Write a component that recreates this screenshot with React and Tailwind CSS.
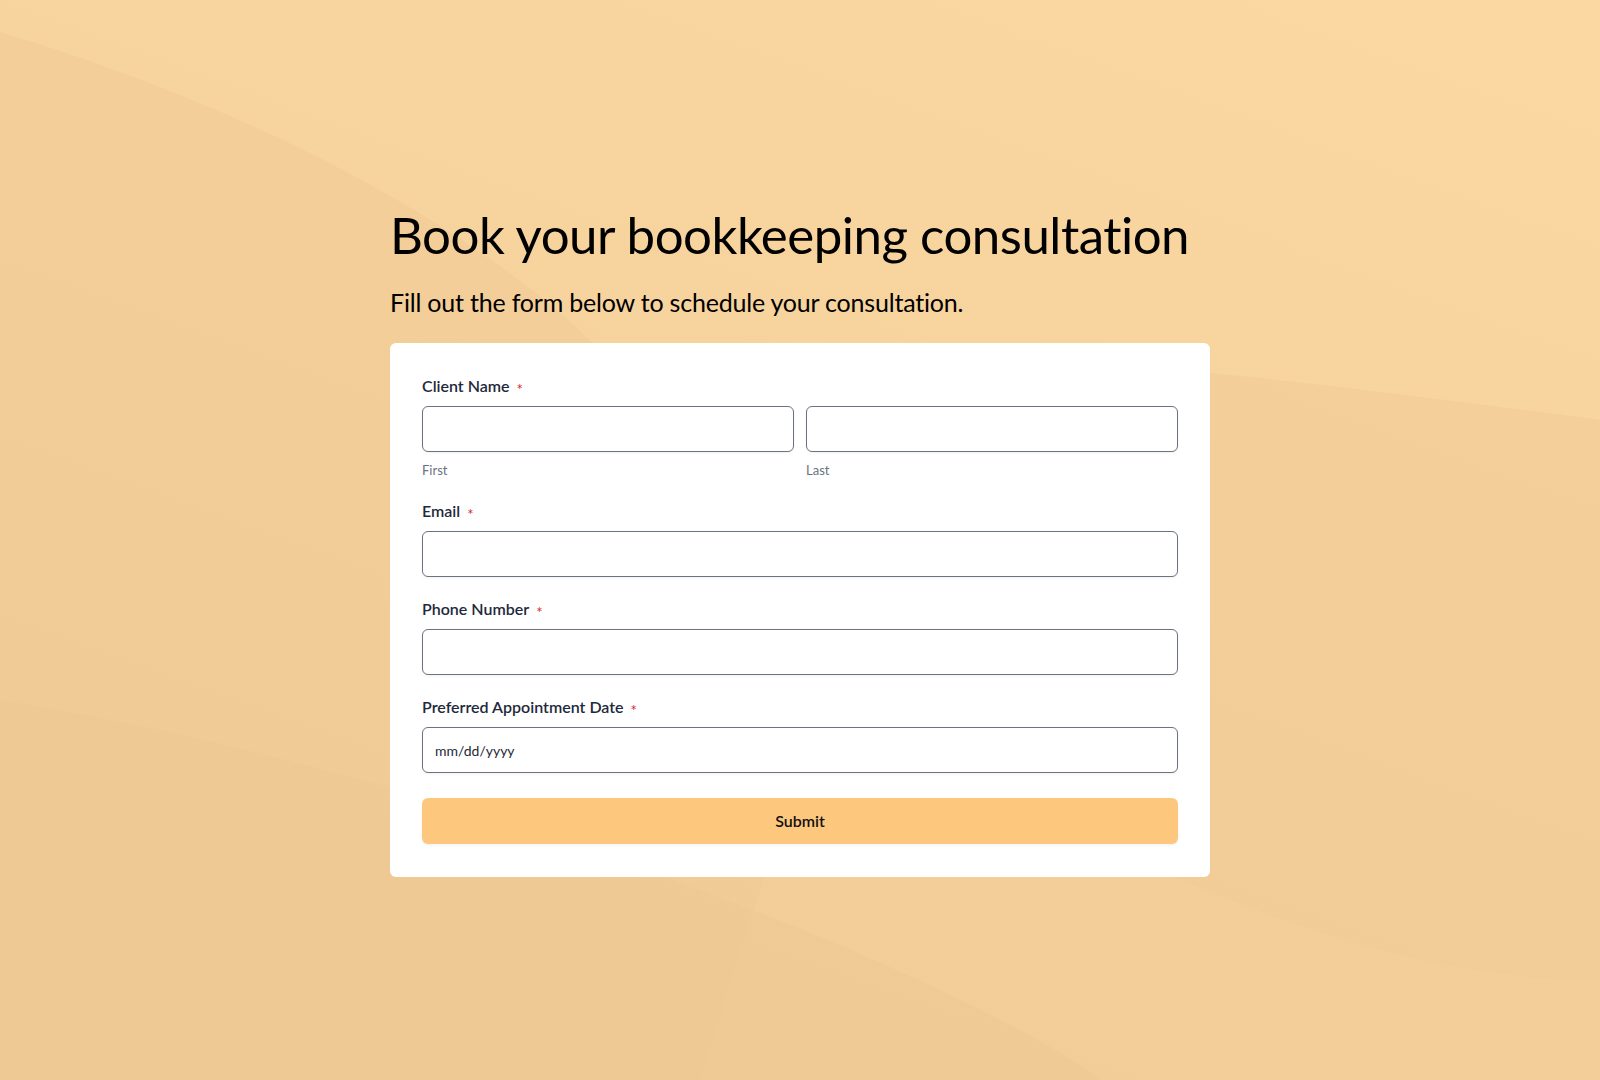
import { useState } from 'react';

function Label({ children }) {
    return (
        <label className="flex items-center text-[16px] font-semibold text-[#1e293b] leading-5 mb-[10px]">
            {children}
            <span className="text-[#dc2626] text-[15px] leading-none ml-[7px] font-normal translate-y-[3px]">*</span>
        </label>
    );
}

function Field({ placeholder, ...props }) {
    return (
        <input
            {...props}
            placeholder={placeholder}
            className="w-full h-[46px] rounded-[6px] border border-[#6b7280] bg-white px-3 text-[14px] text-[#1f2937] placeholder:text-[#1f2937] shadow-[0_1px_3px_rgba(0,0,0,0.06)] outline-none"
        />
    );
}

export default function App() {
    const [form, setForm] = useState({ first: '', last: '', email: '', phone: '', date: '' });
    const update = (key) => (e) => setForm({ ...form, [key]: e.target.value });

    return (
        <div className="relative min-h-screen overflow-hidden bg-[linear-gradient(200deg,#fbd7a1_0%,#f6d29d_45%,#efc994_100%)] font-['Lato','Noto_Sans',sans-serif]">
            {/* Background waves */}
            <svg className="absolute inset-0 w-full h-full" viewBox="0 0 1600 1080" preserveAspectRatio="none">
                <path d="M0 32 C 260 110, 480 230, 600 350 C 900 330, 1300 380, 1600 420 L 1600 1080 L 0 1080 Z" fill="#f0ca94" opacity="0.55" />
                <path d="M820 700 C 1100 850, 1350 980, 1600 980 L 1600 1080 L 700 1080 Z" fill="#f3cf9a" opacity="0.5" />
                <path d="M0 700 C 500 780, 1000 1000, 1100 1080 L 0 1080 Z" fill="#eec892" opacity="0.5" />
            </svg>

            <div className="relative mx-auto w-[820px] pt-[203px] pb-20">
                <h1 className="text-[51px] leading-[64px] font-normal text-black tracking-[-0.5px]">
                    Book your bookkeeping consultation
                </h1>
                <p className="mt-[19px] text-[25px] leading-8 text-black tracking-[-0.2px]">
                    Fill out the form below to schedule your consultation.
                </p>

                <form className="mt-[25px] bg-white rounded-[6px] px-8 pt-[33px] pb-[33px]" onSubmit={(e) => e.preventDefault()}>
                    <Label>Client Name</Label>
                    <div className="grid grid-cols-2 gap-3">
                        <div>
                            <Field value={form.first} onChange={update('first')} />
                            <div className="mt-[10px] text-[13px] leading-4 text-[#6b7280]">First</div>
                        </div>
                        <div>
                            <Field value={form.last} onChange={update('last')} />
                            <div className="mt-[10px] text-[13px] leading-4 text-[#6b7280]">Last</div>
                        </div>
                    </div>

                    <div className="mt-[23px]">
                        <Label>Email</Label>
                        <Field type="email" value={form.email} onChange={update('email')} />
                    </div>

                    <div className="mt-[22px]">
                        <Label>Phone Number</Label>
                        <Field type="tel" value={form.phone} onChange={update('phone')} />
                    </div>

                    <div className="mt-[22px]">
                        <Label>Preferred Appointment Date</Label>
                        <Field placeholder="mm/dd/yyyy" value={form.date} onChange={update('date')} />
                    </div>

                    <button
                        type="submit"
                        className="mt-[25px] w-full h-[46px] rounded-[6px] bg-[#fec77e] text-[16px] font-semibold text-[#111] shadow-[0_1px_3px_rgba(0,0,0,0.06)]"
                    >
                        Submit
                    </button>
                </form>
            </div>
        </div>
    );
}
